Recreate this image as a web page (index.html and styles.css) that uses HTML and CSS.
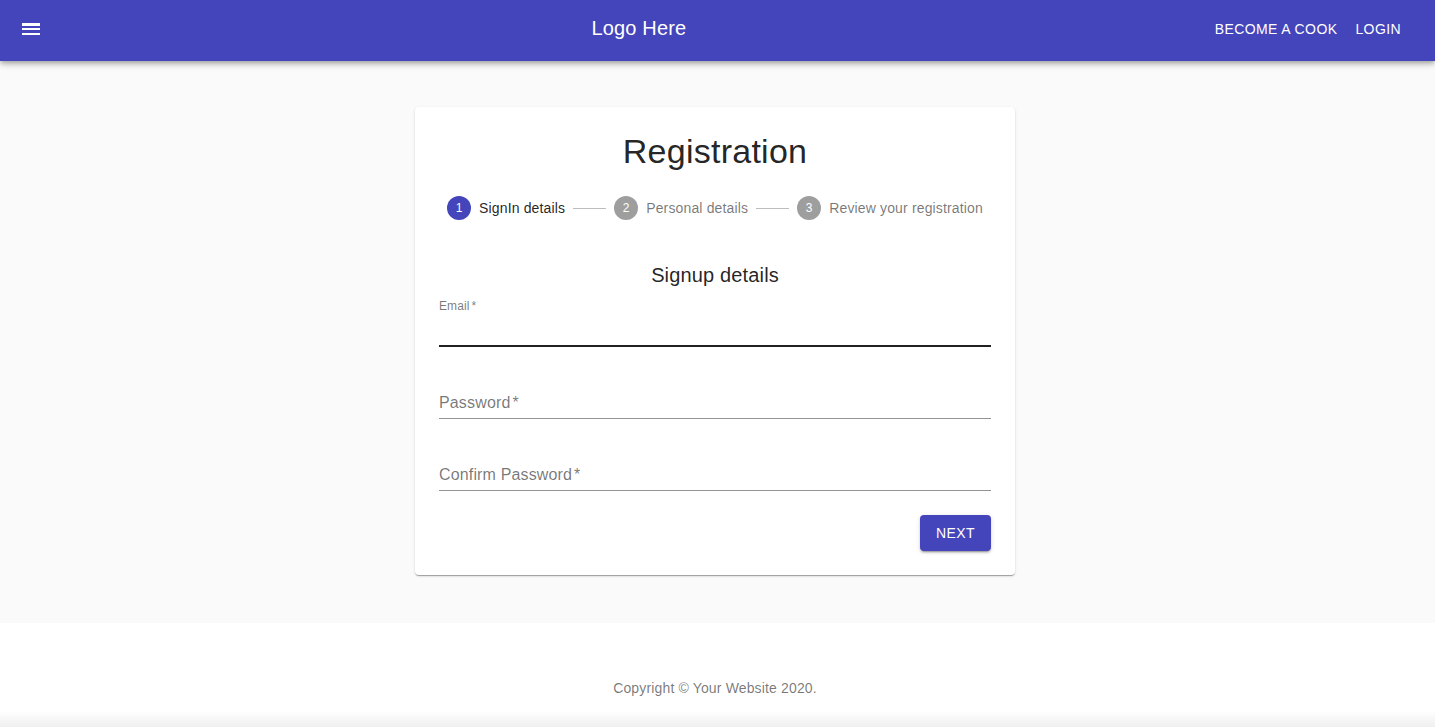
FILE: index.html
```html
<!DOCTYPE html>
<html>
<head>
<meta charset="utf-8">
<link rel="stylesheet" href="styles.css">
</head>
<body>
<header class="appbar">
  <button class="icon-btn" aria-label="menu">
    <svg width="24" height="24" viewBox="0 0 24 24"><path fill="#fff" d="M3 18h18v-2H3v2zm0-5h18v-2H3v2zm0-6v2h18V6H3z"/></svg>
  </button>
  <div class="logo">Logo Here</div>
  <nav class="nav">
    <button class="nav-btn">Become a cook</button>
    <button class="nav-btn">Login</button>
  </nav>
</header>
<main class="main">
  <section class="card">
    <h1 class="title">Registration</h1>
    <div class="stepper">
      <div class="step active"><span class="dot">1</span><span class="label">SignIn details</span></div>
      <div class="connector"></div>
      <div class="step"><span class="dot">2</span><span class="label">Personal details</span></div>
      <div class="connector"></div>
      <div class="step"><span class="dot">3</span><span class="label">Review your registration</span></div>
    </div>
    <h2 class="subtitle">Signup details</h2>
    <div class="field shrunk hover">
      <label class="field-label">Email<span class="req">*</span></label>
      <div class="input"></div>
    </div>
    <div class="field">
      <label class="field-label">Password<span class="req">*</span></label>
      <div class="input"></div>
    </div>
    <div class="field">
      <label class="field-label">Confirm Password<span class="req">*</span></label>
      <div class="input"></div>
    </div>
    <div class="actions">
      <button class="primary-btn">Next</button>
    </div>
  </section>
</main>
<footer class="footer">
  <p class="copy">Copyright © Your Website 2020.</p>
</footer>
<div class="bottom-fade"></div>
</body>
</html>
```
FILE: styles.css
```css
* { box-sizing: border-box; }
html, body { margin: 0; padding: 0; }
body {
  font-family: "Liberation Sans", Arial, Helvetica, sans-serif;
  background: #fafafa;
  color: rgba(0,0,0,0.87);
  width: 1435px;
  height: 727px;
  overflow: hidden;
}
.appbar {
  height: 61px;
  background: #4444bb;
  display: flex;
  align-items: center;
  padding: 0 26px 3px 7px;
  box-shadow: 0 2px 4px -1px rgba(0,0,0,0.2), 0 4px 5px 0 rgba(0,0,0,0.14), 0 1px 10px 0 rgba(0,0,0,0.12);
  position: relative;
  z-index: 2;
}
.icon-btn {
  width: 48px;
  height: 48px;
  border: 0;
  background: none;
  padding: 12px;
  display: flex;
  align-items: center;
  justify-content: center;
}
.icon-btn svg { display: block; }
.logo {
  flex: 1;
  text-align: center;
  color: #fff;
  font-size: 20px;
  line-height: 1.6;
  padding-left: 16px;
  letter-spacing: 0.0075em;
  margin-bottom: 2px;
}
.nav { display: flex; gap: 2px; }
.nav-btn {
  background: none;
  border: 0;
  color: #fff;
  font-family: inherit;
  font-size: 14px;
  text-transform: uppercase;
  letter-spacing: 0.02857em;
  padding: 6px 8px;
  line-height: 1.75;
}
.main {
  height: 562px;
  padding-top: 46px;
  padding-right: 5px;
  display: flex;
  justify-content: center;
  align-items: flex-start;
}
.card {
  width: 600px;
  background: #fff;
  border-radius: 4px;
  padding: 24px;
  box-shadow: 0 2px 1px -1px rgba(0,0,0,0.2), 0 1px 1px 0 rgba(0,0,0,0.14), 0 1px 3px 0 rgba(0,0,0,0.12);
}
.title {
  margin: -1px 0 0;
  text-align: center;
  font-weight: 400;
  font-size: 34px;
  line-height: 42px;
  letter-spacing: 0.00735em;
  color: rgba(0,0,0,0.87);
}
.stepper {
  display: flex;
  justify-content: center;
  align-items: center;
  padding: 24px 0 24px;
}
.step { display: flex; align-items: center; }
.dot {
  width: 24px;
  height: 24px;
  border-radius: 50%;
  background: #9e9e9e;
  color: #fff;
  font-size: 12px;
  display: flex;
  align-items: center;
  justify-content: center;
}
.step.active .dot { background: #4444bb; }
.label {
  margin-left: 8px;
  font-size: 14px;
  letter-spacing: 0.01071em;
  color: rgba(0,0,0,0.54);
}
.step.active .label { color: rgba(0,0,0,0.87); }
.connector {
  width: 33px;
  height: 1px;
  background: #bdbdbd;
  margin: 0 8px;
}
.subtitle {
  margin: 15px 0 0;
  text-align: center;
  font-weight: 400;
  font-size: 20px;
  line-height: 32px;
  letter-spacing: 0.0075em;
  color: rgba(0,0,0,0.87);
}
.field {
  position: relative;
  margin: 24px 0 0;
  height: 48px;
}
.subtitle + .field { margin-top: 8px; }
.field-label {
  position: absolute;
  left: 0;
  top: 24px;
  font-size: 16px;
  line-height: 1;
  letter-spacing: 0.00938em;
  color: rgba(0,0,0,0.54);
}
.field.shrunk .field-label {
  top: 0.5px;
  font-size: 12px;
}
.req { margin-left: 2px; }
.input {
  position: absolute;
  left: 0;
  right: 0;
  bottom: 0;
  height: 32px;
  border-bottom: 1px solid rgba(0,0,0,0.42);
}
.field.hover .input { border-bottom: 2px solid rgba(0,0,0,0.87); }
.actions {
  display: flex;
  justify-content: flex-end;
  margin-top: 24px;
}
.primary-btn {
  background: #4444bb;
  color: #fff;
  border: 0;
  border-radius: 4px;
  height: 36px;
  padding: 6px 16px;
  font-family: inherit;
  font-size: 14px;
  letter-spacing: 0.02857em;
  text-transform: uppercase;
  box-shadow: 0 3px 1px -2px rgba(0,0,0,0.2), 0 2px 2px 0 rgba(0,0,0,0.14), 0 1px 5px 0 rgba(0,0,0,0.12);
}
.footer {
  background: #fff;
  height: 88px;
  display: flex;
  justify-content: center;
  padding-top: 55px;
  padding-right: 5px;
}
.copy {
  margin: 0;
  font-size: 14px;
  line-height: 20px;
  letter-spacing: 0.01071em;
  color: rgba(0,0,0,0.54);
}
.bottom-fade {
  height: 16px;
  background: linear-gradient(#ffffff, #efefef);
}
```
